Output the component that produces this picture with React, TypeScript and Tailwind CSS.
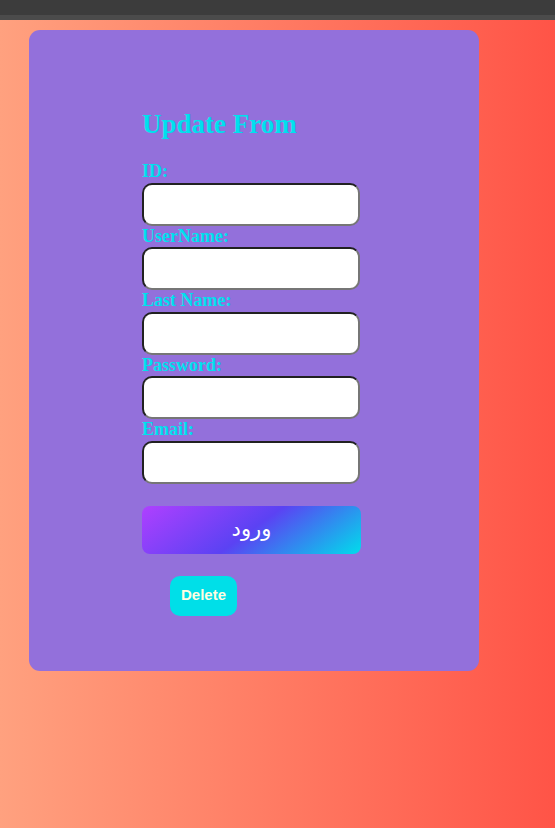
export default function App() {
  const fields = ["ID:", "UserName:", "Last Name:", "Password:", "Email:"];

  return (
    <div className="min-h-screen flex flex-col bg-[#3c3c3c]">
      {/* browser chrome strip */}
      <div className="h-[15px] bg-[#3c3c3c]"></div>
      <div className="h-[5px] bg-[#4b4b4b]"></div>

      {/* page */}
      <div className="flex-1 bg-[linear-gradient(to_right,#ffa17f,#ff5447)] pt-[10px] pl-[29px]">
        <div className="w-[450px] rounded-[11px] bg-[#9370db] pt-[78px] pb-[55px] pl-[113px]">
          <h2 className="font-['Liberation_Serif',serif] font-bold text-[27px] leading-[32px] text-[#00e0ee]">
            Update From
          </h2>

          <form className="mt-[21px] flex flex-col">
            {fields.map((f) => (
              <div key={f} className="flex flex-col">
                <label className="font-['Liberation_Serif',serif] font-bold text-[18px] leading-[20.5px] text-[#00e0ee] mb-[1px]">
                  {f}
                </label>
                <input
                  type="text"
                  className="w-[218px] h-[43px] rounded-[10px] bg-white border-2 [border-style:inset] border-[#767676] px-2 outline-none"
                />
              </div>
            ))}

            <button
              type="button"
              className="mt-[22px] w-[219px] h-[48px] rounded-[8px] bg-[linear-gradient(144deg,#af40ff,#5b42f3_50%,#00ddeb)] shadow-[rgba(151,65,252,0.2)_0_15px_30px_-5px] text-white text-[21px] font-['DejaVu_Sans','Noto_Sans',sans-serif]"
            >
              ورود
            </button>

            <div className="mt-[22px] pl-[28px]">
              <button
                type="button"
                className="w-[67px] h-[40px] rounded-[10px] bg-[#00dfe8] text-[#fffde2] font-bold text-[15px] font-['Liberation_Sans',Arial,sans-serif]"
              >
                Delete
              </button>
            </div>
          </form>
        </div>
      </div>
    </div>
  );
}
